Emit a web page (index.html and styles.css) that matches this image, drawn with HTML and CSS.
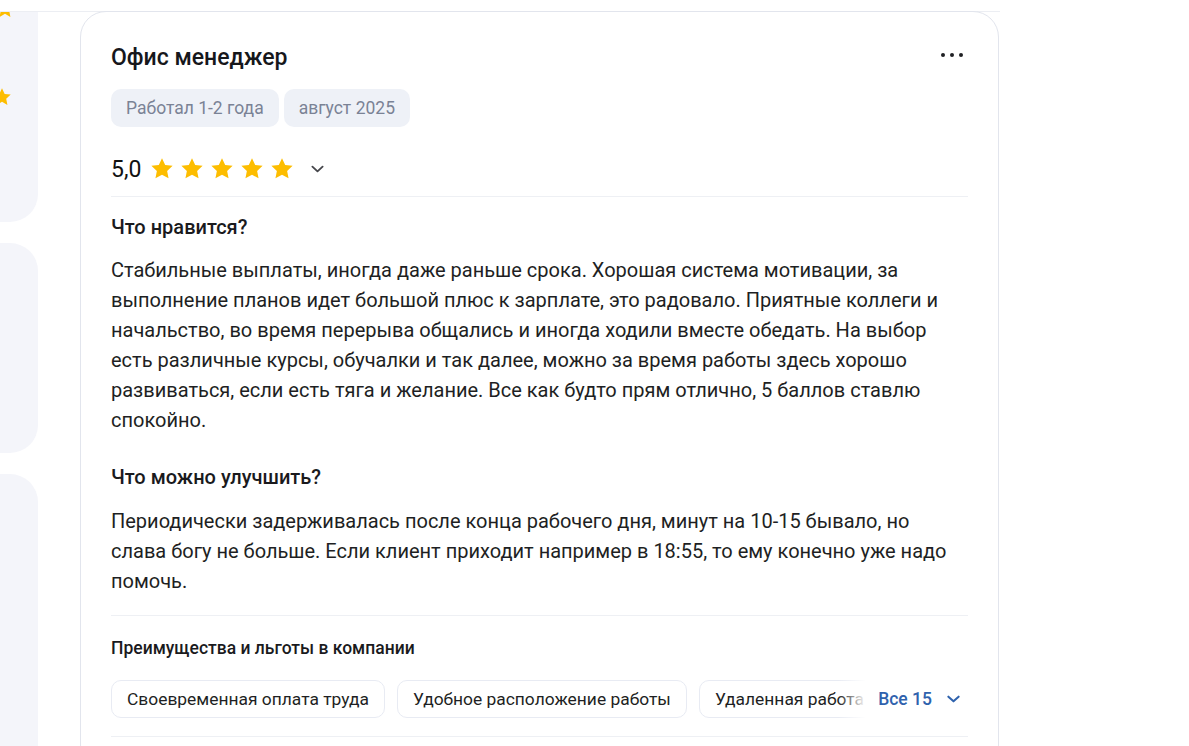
FILE: index.html
```html
<!DOCTYPE html>
<html lang="ru">
<head>
<meta charset="utf-8">
<link rel="stylesheet" href="styles.css">
</head>
<body>
<div class="page">
  <div class="layout">
    <aside class="side">
      <div class="panel panel-first">
        <svg class="side-star side-star-top" viewBox="0 0 24 24"><path d="M12 2.5l2.9 6.1 6.6.8-4.9 4.6 1.3 6.6L12 17.3l-5.9 3.3 1.3-6.6-4.9-4.6 6.6-.8z"/></svg>
        <svg class="side-star side-star-mid" viewBox="0 0 24 24"><path d="M12 2.5l2.9 6.1 6.6.8-4.9 4.6 1.3 6.6L12 17.3l-5.9 3.3 1.3-6.6-4.9-4.6 6.6-.8z"/></svg>
      </div>
      <div class="panel panel-mid"></div>
      <div class="panel panel-last"></div>
    </aside>
    <article class="card">
      <header class="card-head">
        <h2 class="title">Офис менеджер</h2>
        <button class="more" aria-label="Ещё"><span></span><span></span><span></span></button>
      </header>
      <div class="tags">
        <span class="tag">Работал 1-2 года</span>
        <span class="tag">август 2025</span>
      </div>
      <div class="rating">
        <span class="score">5,0</span>
        <div class="stars">
          <svg viewBox="0 0 24 24"><path d="M12 2l2.95 6.26 6.85.83-5.06 4.72 1.3 6.79L12 17.27 5.96 20.6l1.3-6.79L2.2 9.09l6.85-.83z"/></svg>
          <svg viewBox="0 0 24 24"><path d="M12 2l2.95 6.26 6.85.83-5.06 4.72 1.3 6.79L12 17.27 5.96 20.6l1.3-6.79L2.2 9.09l6.85-.83z"/></svg>
          <svg viewBox="0 0 24 24"><path d="M12 2l2.95 6.26 6.85.83-5.06 4.72 1.3 6.79L12 17.27 5.96 20.6l1.3-6.79L2.2 9.09l6.85-.83z"/></svg>
          <svg viewBox="0 0 24 24"><path d="M12 2l2.95 6.26 6.85.83-5.06 4.72 1.3 6.79L12 17.27 5.96 20.6l1.3-6.79L2.2 9.09l6.85-.83z"/></svg>
          <svg viewBox="0 0 24 24"><path d="M12 2l2.95 6.26 6.85.83-5.06 4.72 1.3 6.79L12 17.27 5.96 20.6l1.3-6.79L2.2 9.09l6.85-.83z"/></svg>
        </div>
        <svg class="chev chev-dark" viewBox="0 0 14 8"><path d="M1.5 1.5L7 6.5l5.5-5"/></svg>
      </div>
      <section class="block">
        <h3 class="block-title">Что нравится?</h3>
        <p class="text">Стабильные выплаты, иногда даже раньше срока. Хорошая система мотивации, за выполнение планов идет большой плюс к зарплате, это радовало. Приятные коллеги и начальство, во время перерыва общались и иногда ходили вместе обедать. На выбор есть различные курсы, обучалки и так далее, можно за время работы здесь хорошо развиваться, если есть тяга и желание. Все как будто прям отлично, 5 баллов ставлю спокойно.</p>
        <h3 class="block-title block-title-next">Что можно улучшить?</h3>
        <p class="text text-next">Периодически задерживалась после конца рабочего дня, минут на 10-15 бывало, но слава богу не больше. Если клиент приходит например в 18:55, то ему конечно уже надо помочь.</p>
      </section>
      <section class="benefits">
        <h4 class="benefits-title">Преимущества и льготы в компании</h4>
        <div class="chips-row">
          <div class="chips">
            <span class="chip">Своевременная оплата труда</span>
            <span class="chip">Удобное расположение работы</span>
            <span class="chip">Удаленная работа</span>
          </div>
          <button class="all">Все 15
            <svg class="chev chev-blue" viewBox="0 0 14 8"><path d="M1.5 1.5L7 6.5l5.5-5"/></svg>
          </button>
        </div>
      </section>
    </article>
  </div>
</div>
</body>
</html>
```

FILE: styles.css
```css
* { box-sizing: border-box; }
html, body { margin: 0; padding: 0; background: #fff; }
body {
  font-family: Roboto, "Noto Sans", "Liberation Sans", sans-serif;
  color: #1c1c1e;
  overflow: hidden;
  height: 746px;
}
.page { padding-top: 11px; }
.layout {
  display: flex;
  width: 1000px;
  border-top: 1px solid #eceef3;
  align-items: flex-start;
}
.side {
  width: 38px;
  flex: none;
  display: flex;
  flex-direction: column;
  gap: 21px;
}
.panel {
  background: #f4f5fa;
  border-radius: 0 28px 28px 0;
  height: 210px;
  position: relative;
  overflow: hidden;
}
.panel-first { border-top-right-radius: 0; }
.panel-last { height: 300px; }
.side-star { position: absolute; width: 22px; height: 22px; fill: #fdbd00; }
.side-star-top { left: -6px; top: -14px; }
.side-star-mid { left: -9px; top: 74px; }

.card {
  margin-left: 42px;
  margin-top: -1px;
  width: 919px;
  flex: none;
  border: 1px solid #e2e5ed;
  border-radius: 26px;
  padding: 30px 30px 0 30px;
  min-height: 760px;
}
.card-head {
  display: flex;
  justify-content: space-between;
  align-items: center;
}
.title {
  margin: 0;
  font-size: 23px;
  font-weight: 500;
  line-height: 32px;
  color: #16171b;
}
.more {
  border: 0;
  background: none;
  padding: 0;
  display: flex;
  gap: 5px;
  margin-right: 5px;
  margin-top: -7px;
}
.more span {
  width: 4px;
  height: 4px;
  border-radius: 50%;
  background: #1f2024;
}
.tags { display: flex; gap: 5px; margin-top: 15px; }
.tag {
  background: #eef1f7;
  color: #7a8295;
  font-size: 17.5px;
  line-height: 38px;
  padding: 0 15px;
  border-radius: 10px;
}
.rating {
  display: flex;
  align-items: center;
  height: 28px;
  margin-top: 28px;
  box-sizing: content-box;
  padding-bottom: 13px;
  border-bottom: 1px solid #eef0f4;
}
.score {
  font-size: 23px;
  font-weight: 400;
  color: #111;
  margin-right: 8px;
}
.stars { display: flex; gap: 4px; }
.stars svg { width: 26px; height: 26px; fill: #fdbd00; }
.chev { fill: none; stroke-width: 2; stroke-linecap: round; stroke-linejoin: round; }
.chev-dark { width: 13px; height: 8px; stroke: #45464b; margin-left: 16px; }
.block { padding-top: 16px; padding-bottom: 19px; border-bottom: 1px solid #eef0f4; }
.block-title {
  margin: 0;
  font-size: 20px;
  font-weight: 500;
  line-height: 28px;
  color: #1a1a1d;
}
.block-title-next { margin-top: 28px; }
.text {
  margin: 14px 0 0 0;
  font-size: 20px;
  line-height: 30px;
  color: #1e1f23;
}
.text-next { margin-top: 15px; }
.benefits { padding-top: 20px; padding-bottom: 18px; border-bottom: 1px solid #eef0f4; }
.benefits-title {
  margin: 0;
  font-size: 17.5px;
  font-weight: 500;
  line-height: 24px;
  color: #1a1a1d;
}
.chips-row {
  display: flex;
  align-items: center;
  margin-top: 20px;
  position: relative;
}
.chips { display: flex; gap: 12px; flex: 1; overflow: hidden; white-space: nowrap; }
.chip {
  flex: none;
  border: 1px solid #e8ebf3;
  border-radius: 10px;
  padding: 0 15px;
  font-size: 17.4px;
  line-height: 36px;
  color: #1e1f23;
}
.all {
  position: absolute;
  right: 0;
  top: 0;
  bottom: 0;
  border: 0;
  background: linear-gradient(to right, rgba(255,255,255,0), #fff 28px);
  padding: 0 8px 0 40px;
  display: flex;
  align-items: center;
  font-family: inherit;
  font-size: 17.5px;
  font-weight: 500;
  color: #2f62ad;
}
.chev-blue { width: 13px; height: 8px; stroke: #2f62ad; margin-left: 15px; stroke-width: 2.2; }
```
